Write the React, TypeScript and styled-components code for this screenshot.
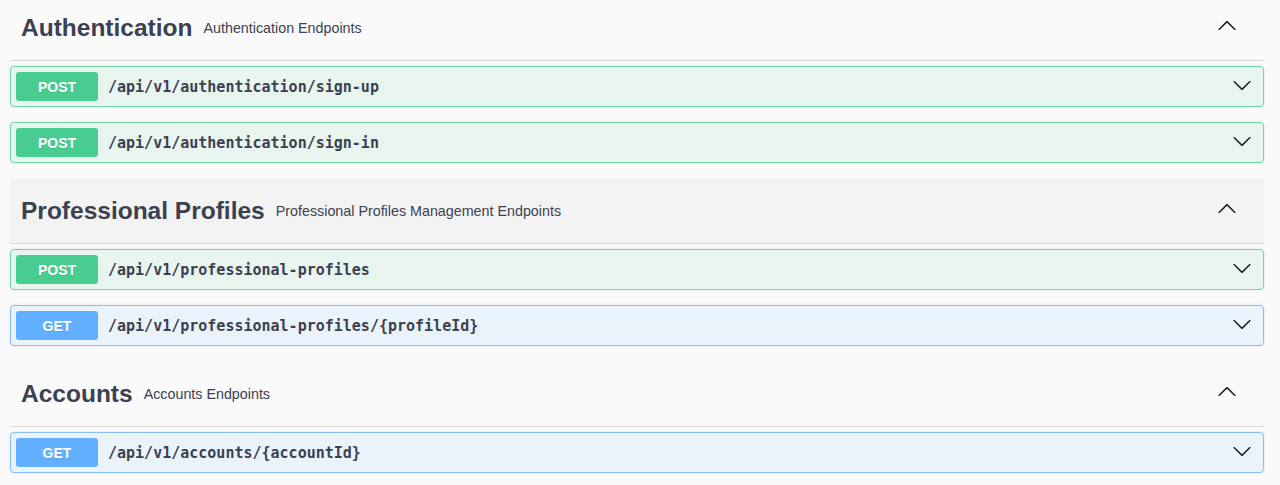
import styled, { createGlobalStyle } from "styled-components";

const GlobalStyle = createGlobalStyle`
  html, body {
    margin: 0;
    padding: 0;
    background: #fafafa;
    font-family: "Liberation Sans", Arial, sans-serif;
    color: #3b4151;
  }
`;

type Method = "POST" | "GET";

const methodColors: Record<Method, { main: string; border: string; bg: string }> = {
  POST: { main: "#49cc90", border: "#72d5a7", bg: "#e8f5ef" },
  GET: { main: "#61affe", border: "#86bff6", bg: "#ebf3fa" },
};

const sections: {
  name: string;
  description: string;
  hovered?: boolean;
  operations: { method: Method; path: string }[];
}[] = [
  {
    name: "Authentication",
    description: "Authentication Endpoints",
    operations: [
      { method: "POST", path: "/api/v1/authentication/sign-up" },
      { method: "POST", path: "/api/v1/authentication/sign-in" },
    ],
  },
  {
    name: "Professional Profiles",
    description: "Professional Profiles Management Endpoints",
    hovered: true,
    operations: [
      { method: "POST", path: "/api/v1/professional-profiles" },
      { method: "GET", path: "/api/v1/professional-profiles/{profileId}" },
    ],
  },
  {
    name: "Accounts",
    description: "Accounts Endpoints",
    operations: [{ method: "GET", path: "/api/v1/accounts/{accountId}" }],
  },
];

const Arrow = ({ up }: { up?: boolean }) => (
  <ArrowSvg viewBox="0 0 20 20" width="20" height="20" $up={up}>
    <path d="M17.418 6.109c.272-.268.709-.268.979 0s.271.701 0 .969l-7.908 7.83c-.27.268-.707.268-.979 0l-7.908-7.83c-.27-.268-.27-.701 0-.969.271-.268.709-.268.979 0L10 13.25l7.418-7.141z" />
  </ArrowSvg>
);

export default function App() {
  return (
    <>
      <GlobalStyle />
      <Wrapper>
        {sections.map(section => (
          <Section key={section.name}>
            <TagHeader $hovered={section.hovered}>
              <TagTitle>{section.name}</TagTitle>
              <TagDescription>{section.description}</TagDescription>
              <Arrow up />
            </TagHeader>

            {section.operations.map(op => (
              <OpBlock key={op.path} $method={op.method}>
                <MethodBadge $method={op.method}>{op.method}</MethodBadge>
                <OpPath>{op.path}</OpPath>
                <Arrow />
              </OpBlock>
            ))}
          </Section>
        ))}
      </Wrapper>
    </>
  );
}

const Wrapper = styled.main`
  margin-top: -5px;
  padding: 0 16px 0 10px;
`;

const Section = styled.section`
  display: flex;
  flex-direction: column;
`;

const TagHeader = styled.div<{ $hovered?: boolean }>`
  display: flex;
  align-items: center;
  height: 65px;
  padding: 0 27px 0 10px;
  margin-bottom: 5px;
  border-bottom: 1px solid #d6d7da;
  background: ${p => (p.$hovered ? "#f3f3f3" : "transparent")};
`;

const TagTitle = styled.h3`
  margin: 0;
  font-size: 24.5px;
  font-weight: 700;
  color: #3b4151;
  padding-left: 1px;
`;

const TagDescription = styled.small`
  flex: 1;
  padding-left: 11px;
  font-size: 14.3px;
  color: #3b4151;
`;

const ArrowSvg = styled.svg<{ $up?: boolean }>`
  flex: none;
  margin-bottom: 4px;
  fill: #1b1b1b;
  transform: ${p => (p.$up ? "rotate(180deg)" : "none")};
`;

const OpBlock = styled.div<{ $method: Method }>`
  display: flex;
  align-items: center;
  padding: 5px 11px 5px 5px;
  margin-bottom: 15px;
  border: 1px solid ${p => methodColors[p.$method].border};
  border-radius: 4px;
  background: ${p => methodColors[p.$method].bg};
  box-shadow: 0 0 3px rgba(0, 0, 0, 0.1);
`;

const MethodBadge = styled.span<{ $method: Method }>`
  flex: none;
  width: 82px;
  height: 29px;
  display: flex;
  align-items: center;
  justify-content: center;
  border-radius: 3px;
  background: ${p => methodColors[p.$method].main};
  color: #fff;
  font-size: 14px;
  font-weight: 700;
  text-shadow: 0 1px 0 rgba(0, 0, 0, 0.1);
`;

const OpPath = styled.span`
  flex: 1;
  padding-left: 10px;
  font-family: "DejaVu Sans Mono", "Liberation Mono", monospace;
  font-size: 15px;
  font-weight: 700;
  color: #3b4151;
`;
